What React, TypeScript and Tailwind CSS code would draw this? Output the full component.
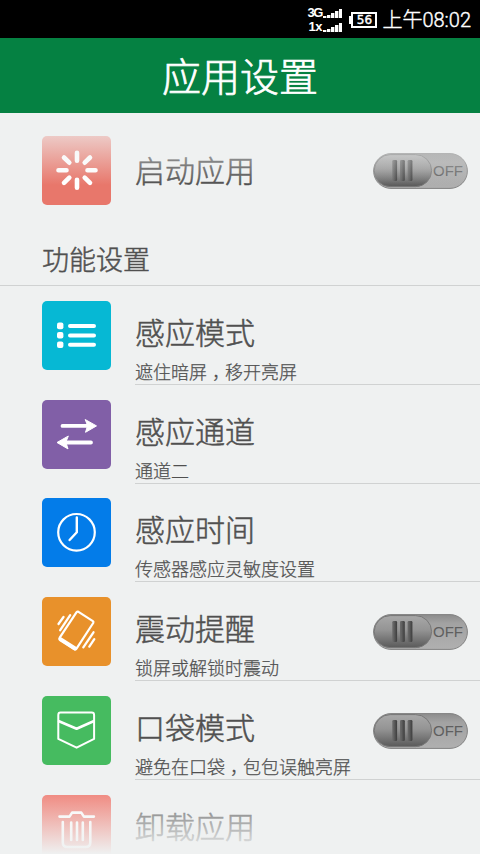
import React from "react";

const Switch = () => (
  <svg className="mr-3 h-9 w-[95px] shrink-0" viewBox="0 0 95 36">
    <defs>
      <linearGradient id="track" x1="0" y1="0" x2="0" y2="1">
        <stop offset="0" stopColor="#8c8c8c" />
        <stop offset="0.25" stopColor="#a2a2a2" />
        <stop offset="1" stopColor="#b0b0b0" />
      </linearGradient>
      <linearGradient id="knob" x1="0" y1="0" x2="0" y2="1">
        <stop offset="0" stopColor="#a8a8a8" />
        <stop offset="0.45" stopColor="#949494" />
        <stop offset="1" stopColor="#5a5a5a" />
      </linearGradient>
      <linearGradient id="grip" x1="0" y1="0" x2="1" y2="0">
        <stop offset="0" stopColor="#6a6a6a" />
        <stop offset="0.3" stopColor="#626262" />
        <stop offset="1" stopColor="#3c3c3c" />
      </linearGradient>
    </defs>
    <rect x="0.6" y="0.6" width="93.8" height="34.8" rx="17.4" fill="url(#track)" stroke="#828282" strokeWidth="1" />
    <rect x="1.2" y="1.6" width="57.4" height="32" rx="16" fill="url(#knob)" stroke="#777" strokeWidth="1" />
    <rect x="19.3" y="7" width="4.8" height="21" rx="1.2" fill="url(#grip)" />
    <rect x="27" y="7" width="4.8" height="21" rx="1.2" fill="url(#grip)" />
    <rect x="34.6" y="7" width="4.8" height="21" rx="1.2" fill="url(#grip)" />
    <text x="60" y="23.4" fontSize="15.5" textLength="30" lengthAdjust="spacingAndGlyphs" fontFamily="Liberation Sans, sans-serif" fill="#5f5f5f">
      OFF
    </text>
  </svg>
);

const Tile = ({ color, children }: { color: string; children: React.ReactNode }) => (
  <div className={`size-[69px] shrink-0 rounded-[5px] ${color}`}>
    <svg
      className="size-full"
      viewBox="0 0 69 69"
      fill="none"
      stroke="#fff"
      strokeWidth="2.6"
      strokeLinecap="round"
      strokeLinejoin="round"
    >
      {children}
    </svg>
  </div>
);

const LoadIcon = () => (
  <g strokeWidth="4.6">
    <path d="M35 16.8v8M35 43.7v8M16.5 34.2h8M45.5 34.2h8M22 21.5l5.3 5.2M42.7 41.6l5.3 5.2M48 21.5l-5.3 5.2M27.3 41.6l-5.3 5.2" />
  </g>
);

const ListIcon = () => (
  <>
    <path d="M28 25h24M28 34.4h24M28 43.7h24" strokeWidth="4" />
    <g fill="#fff" stroke="none">
      <rect x="15" y="21.6" width="6.4" height="6.6" rx="2" />
      <rect x="15" y="31" width="6.4" height="6.6" rx="2" />
      <rect x="15" y="40.4" width="6.4" height="6.6" rx="2" />
    </g>
  </>
);

const SwapIcon = () => (
  <>
    <path d="M20.5 25.9H45M25 42.5h24" strokeWidth="3.8" />
    <path d="M43.5 19.7l11 6.2-11 6.4 2-6.4zM26 36.2l-11 6.3 11 6.4-2-6.4z" fill="#fff" strokeWidth="1" />
  </>
);

const ClockIcon = () => (
  <>
    <circle cx="34.5" cy="34.3" r="18.3" strokeWidth="2.2" />
    <path d="M34.8 19.5v14.8L27.6 42" strokeWidth="2.4" />
  </>
);

const ShakeIcon = () => (
  <>
    <path d="M36.5 14.8l14.4 9.4q1 .8.3 1.8L34.5 51.6q-.9 1.2-2.2.4L18 42.5q-1-.8-.3-1.9l16.9-25.4q.8-1 1.9-.4z" strokeWidth="2.2" />
    <path d="M18.4 42.2l14.6 9.3" strokeWidth="4" />
    <path d="M21.5 20l-5 7M28.2 18.2l-10 15M51.5 35.3l-10.2 15M52.3 42.2l-5 7.4" strokeWidth="2.3" />
  </>
);

const PocketIcon = () => (
  <>
    <path d="M18.5 16.5h31.2q2.4 0 2.4 2.4v24L34.6 51.7 16.3 42.9v-24q0-2.4 2.2-2.4z" strokeWidth="2" />
    <path d="M17 25.3l17.6 7.4L51.5 25.3" strokeWidth="2.6" />
  </>
);

const TrashIcon = () => (
  <>
    <path d="M17.5 21.6h10l2.6-4h9.2l2.6 4h10" />
    <path d="M20.8 27v20.5q0 4.5 4.5 4.5h18.5q4.5 0 4.5-4.5V27M29.2 27.5V45M35 27.5V45M40.8 27.5V45" />
  </>
);

const items = [
  { title: "感应模式", desc: ["遮住暗屏", "移开亮屏"], color: "bg-[#06b8d4]", icon: <ListIcon />, h: "h-[99px]", pt: "pt-[15px]", mt: "mt-7" },
  { title: "感应通道", desc: ["通道二"], color: "bg-[#815fa7]", icon: <SwapIcon />, h: "h-[99px]", pt: "pt-[15px]", mt: "mt-7" },
  { title: "感应时间", desc: ["传感器感应灵敏度设置"], color: "bg-[#037ce9]", icon: <ClockIcon />, h: "h-[98px]", pt: "pt-[14px]", mt: "mt-[27px]" },
  { title: "震动提醒", desc: ["锁屏或解锁时震动"], color: "bg-[#e8912b]", icon: <ShakeIcon />, h: "h-[99px]", pt: "pt-[15px]", mt: "mt-7", toggle: true },
  { title: "口袋模式", desc: ["避免在口袋", "包包误触亮屏"], color: "bg-[#46bb60]", icon: <PocketIcon />, h: "h-[99px]", pt: "pt-[15px]", mt: "mt-7", toggle: true },
];

const Signal = () => (
  <svg className="h-[9px] w-[19px]" viewBox="0 0 19 9" fill="#fff">
    <path d="M0 7h3.4v2H0zM4 6h3.4v3H4zM8 4h3.4v5H8zM12 2h3.4v7H12zM16 0h3v9h-3z" />
  </svg>
);

const StatusBar = () => (
  <div className="flex h-[38px] shrink-0 items-center justify-end bg-black pr-[9px] text-white">
    <div className="mr-[7px] flex flex-col gap-[4px] pt-px font-['Liberation_Sans'] text-[13px] leading-[10px] font-bold">
      <div className="flex items-end">
        <span className="w-4 tracking-[-1.5px]">3G</span>
        <Signal />
      </div>
      <div className="flex items-end">
        <span className="w-4 pl-px tracking-[-0.5px]">1x</span>
        <Signal />
      </div>
    </div>
    <div className="flex items-center pt-px">
      <div className="h-2 w-[2px] bg-white" />
      <div className="flex h-4 w-[26px] items-center justify-center border-2 border-white font-['DejaVu_Sans'] text-[12px] [-webkit-text-stroke:0.4px]">
        56
      </div>
    </div>
    <span className="mt-[2px] ml-[5px] text-[20px] leading-6 font-light whitespace-nowrap [-webkit-text-stroke:0.4px]">
      上午08:02
    </span>
  </div>
);

export default function App() {
  return (
    <div className="flex h-[854px] w-[480px] flex-col overflow-hidden bg-[#eff1f1] font-[Roboto,'Noto_Sans_CJK_SC',sans-serif] text-[#505050]">
      <StatusBar />
      <header className="flex h-[75px] shrink-0 items-center justify-center bg-[#058142] pt-[5px] text-[39px] font-light text-white [-webkit-text-stroke:0.7px]">
        应用设置
      </header>

      <main className="relative flex-1 overflow-hidden font-light [-webkit-text-stroke:0.5px]">
        <section className="flex h-[115px] items-center pl-[42px]">
          <Tile color="bg-[#e8776b]">
            <LoadIcon />
          </Tile>
          <h2 className="ml-6 flex-1 pt-[2px] text-[30px] font-light">启动应用</h2>
          <Switch />
        </section>
        <h3 className="flex h-[58px] items-center border-b border-[#d0d2d2] pt-[9px] pl-[42px] text-[27px] font-light">
          功能设置
        </h3>

        {items.map((item) => (
          <section key={item.title} className={`flex pl-[42px] ${item.h}`}>
            <div className={item.pt}>
              <Tile color={item.color}>{item.icon}</Tile>
            </div>
            <div className="ml-6 flex flex-1 border-b border-[#d0d2d2]">
              <div className="flex-1">
                <h2 className={`text-[30px] leading-10 font-light ${item.mt}`}>{item.title}</h2>
                <p className="mt-[7px] text-[18px] leading-6 whitespace-nowrap [-webkit-text-stroke:0.25px]">
                  {item.desc[0]}
                  {/* half-width comma, centred in its cell */}
                  {item.desc[1] && (
                    <span className="inline-block w-[18px] pl-[5px] [font-feature-settings:'halt']">，</span>
                  )}
                  {item.desc[1]}
                </p>
              </div>
              {item.toggle && (
                <div className="-ml-24 pt-[32px] [-webkit-text-stroke:0]">
                  <Switch />
                </div>
              )}
            </div>
          </section>
        ))}

        <section className="flex h-[99px] pl-[42px]">
          <div className="pt-[15px]">
            <Tile color="bg-[#f0766b]">
              <TrashIcon />
            </Tile>
          </div>
          <h2 className="mt-7 ml-6 text-[30px] leading-10 font-light">卸载应用</h2>
        </section>

        {/* scroll fading edges */}
        <div className="absolute inset-x-0 top-0 h-[72px] bg-linear-to-b from-[#eff1f1] to-[#eff1f1]/0" />
        <div className="absolute inset-x-0 bottom-0 h-[72px] bg-linear-to-t from-[#eff1f1] to-[#eff1f1]/0" />
      </main>
    </div>
  );
}
